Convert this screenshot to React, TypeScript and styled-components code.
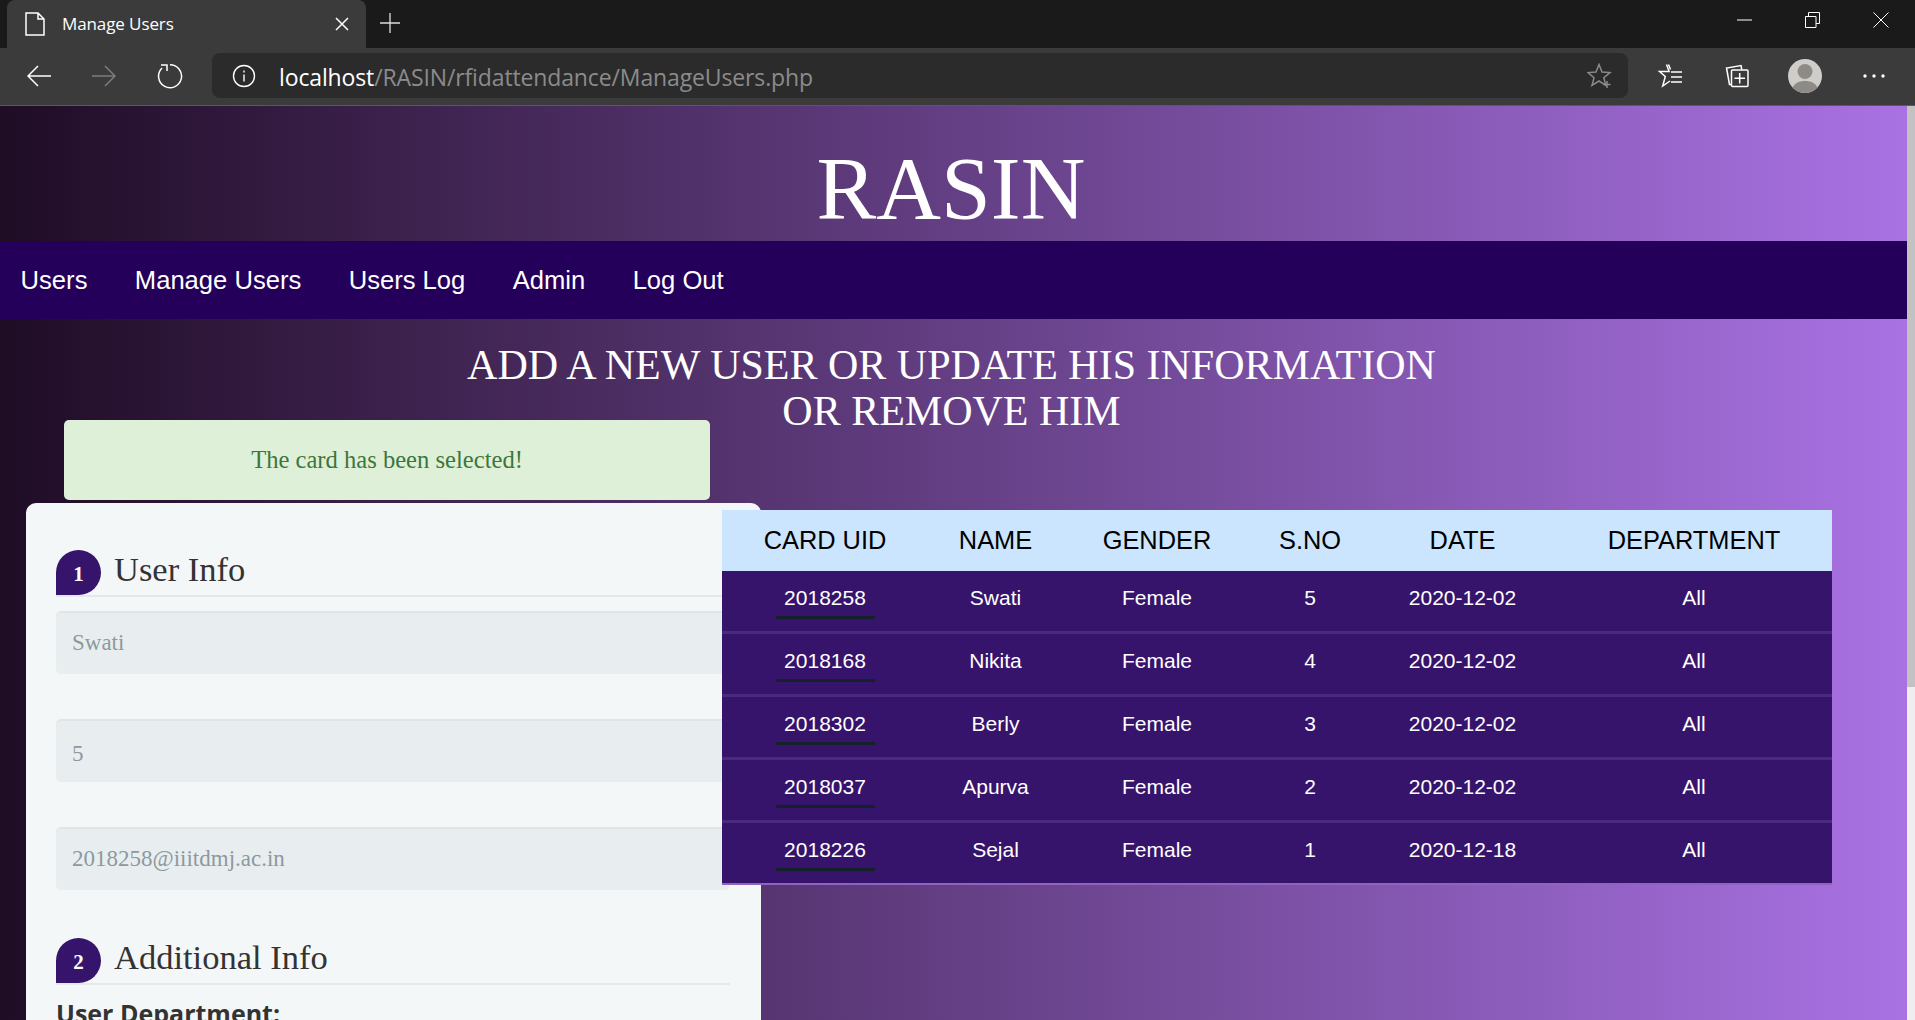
import React from "react";
import styled, { createGlobalStyle } from "styled-components";

const Global = createGlobalStyle`
  html, body { margin: 0; padding: 0; height: 100%; overflow: hidden; background: #1a1a1a; }
  #root { height: 100%; }
  * { box-sizing: border-box; }
`;

const Shell = styled.div`
  width: 1915px; height: 1020px; display: flex; flex-direction: column; overflow: hidden;
`;
const TabStrip = styled.div`
  height: 48px; background: #1a1a1a; display: flex; align-items: flex-start; flex: none;
`;
const Tab = styled.div`
  margin-left: 7px; width: 359px; height: 48px; background: #3b3b3b; border-radius: 8px 8px 0 0;
  display: flex; align-items: center; padding: 0 0 1px 18px; color: #fff;
  font: 400 17px "Open Sans", sans-serif; letter-spacing: -0.1px;
`;
const TabTitle = styled.span`
  margin-left: 17px; flex: 1; margin-top: -1px;
`;
const TabClose = styled.span`
  display: flex; margin-right: 17px;
`;
const NewTab = styled.span`
  display: flex; margin: 13px 0 0 14px;
`;
const Spacer = styled.div`
  flex: 1;
`;
const WindowButton = styled.span<{ $w: number }>`
  width: ${(p) => p.$w}px; height: 40px; display: flex; align-items: center; justify-content: center;
`;
const Toolbar = styled.div`
  height: 58px; background: #3b3b3b; display: flex; align-items: center; flex: none;
  border-bottom: 1px solid #5a5a5a; padding-bottom: 2px;
`;
const NavIcon = styled.span<{ $w: number }>`
  width: ${(p) => p.$w}px; height: 45px; display: flex; align-items: center; justify-content: center; flex: none;
`;
const AddressBar = styled.div`
  width: 1416px; height: 45px; margin-left: 3px; background: #2b2b2b; border-radius: 8px;
  display: flex; align-items: center; padding-left: 20px; flex: none;
  font: 400 23px "Open Sans", sans-serif; letter-spacing: -0.13px; color: #8b8b8b;
`;
const UrlHost = styled.span`
  color: #fff; margin-left: 23px; padding-top: 2px;
`;
const UrlPath = styled.span`
  flex: 1; padding-top: 2px;
`;
const StarAdd = styled.span`
  display: flex; margin-right: 15px;
`;
const Viewport = styled.div`
  flex: 1; display: flex; min-height: 0;
`;
const Page = styled.div`
  flex: 1; min-width: 0; overflow: hidden;
  background: linear-gradient(to right, #1f0c25, #a972e3);
  font-family: "Liberation Sans", Arial, sans-serif;
`;
const ScrollTrack = styled.div`
  width: 8px; flex: none; background: #eeeeee; display: flex;
`;
const ScrollThumb = styled.div`
  width: 100%; height: 581px; background: #c2c2c2;
`;
const Header = styled.header`
  height: 135px; display: flex; align-items: center; justify-content: center; padding: 0 5px 0 0;
`;
const Brand = styled.h1`
  margin: 0; font: 400 89.6px/1 "Liberation Serif", "Times New Roman", serif; color: #fff; padding-top: 28px;
`;
const NavBar = styled.nav`
  height: 78px; background: #24005a; display: flex; align-items: center; padding-left: 20.6px; gap: 47.4px;
`;
const NavLink = styled.a`
  color: #fff; font-size: 25.6px; text-decoration: none;
`;
const Heading = styled.h2`
  margin: 23px auto 0; width: 1000px; text-align: center; color: #fff; position: relative; left: -2px;
  font: 400 42px/46px "Liberation Serif", "Times New Roman", serif;
`;
const Content = styled.div`
  display: flex; align-items: flex-start; margin-top: -14px;
`;
const LeftColumn = styled.div`
  width: 760px; padding-left: 26px; flex: none;
`;
const Alert = styled.div`
  margin-left: 38px; width: 646px; height: 80px; background: #dff0d8; border-radius: 5px;
  color: #3c763d; display: flex; align-items: center; justify-content: center;
  font: 400 24.6px "Liberation Serif", Georgia, serif;
`;
const Card = styled.section`
  margin-top: 3px; height: 560px; width: 735px; background: #f4f7f8; border-radius: 10px 10px 0 0; padding: 47px 31px 0 30px;
  font-family: "Liberation Serif", Georgia, serif;
`;
const SectionTitle = styled.div`
  display: flex; align-items: flex-end; height: 47px; border-bottom: 2px solid #e4e8ea;
  font-size: 34.5px; color: #333; line-height: 45px;
`;
const Step = styled.span`
  width: 45px; height: 45px; background: #37146b; color: #fff; border-radius: 50% 50% 50% 0;
  display: flex; align-items: center; justify-content: center; flex: none; margin-right: 13px;
  font: 700 21px "Liberation Serif", Georgia, serif; padding-top: 4px; align-self: flex-start;
`;
const TitleText = styled.span`
  margin-bottom: 3px;
`;
const Fields = styled.div`
  margin-top: 14px; display: flex; flex-direction: column; gap: 45px;
`;
const Field = styled.div<{ $drop?: number }>`
  height: 63px; background: #e8eeef; border-radius: 5px; box-shadow: inset 0 2px 0 rgba(0,0,0,.03);
  color: #8d999f; font-size: 23px; display: flex; align-items: center; padding: ${(p) => p.$drop ?? 0}px 0 0 16px;
`;
const SecondTitle = styled(SectionTitle)`
  margin-top: 48px;
`;
const Label = styled.div`
  margin-top: 13px; font: 700 25px/30px "Open Sans", "Noto Sans", sans-serif; color: #333;
`;
const TableWrap = styled.div`
  margin: 90px 0 0 -38px; width: 1110px; flex: none; border-bottom: 2px solid #8f63c0;
`;
const Table = styled.table`
  width: 1110px; border-collapse: separate; border-spacing: 0; table-layout: fixed;
`;
const HeadCell = styled.th<{ $w: number }>`
  width: ${(p) => p.$w}px; height: 61px; background: #cce5ff; color: #000; font-size: 25.4px; font-weight: 400; text-align: center; padding: 0;
`;
const Cell = styled.td`
  height: 63px; background: #37146b; border-bottom: 3px solid #4a2a7c;
  color: #fff; font-size: 21px; text-align: center; padding: 0 0 6px;
  tr:last-child > & { border-bottom: 0; height: 60px; }
`;
const CardCell = styled(Cell)`
  padding: 0 0 3px;
`;
const CardId = styled.span`
  display: inline-block; width: 99px; padding-bottom: 6px; margin-top: 6px; border-bottom: 3px solid #14212b; line-height: 24px;
`;

const I = { fill: "none", stroke: "#fff", strokeWidth: 1.5 };

const rows = [
  ["2018258", "Swati", "Female", "5", "2020-12-02", "All"],
  ["2018168", "Nikita", "Female", "4", "2020-12-02", "All"],
  ["2018302", "Berly", "Female", "3", "2020-12-02", "All"],
  ["2018037", "Apurva", "Female", "2", "2020-12-02", "All"],
  ["2018226", "Sejal", "Female", "1", "2020-12-18", "All"],
];
const heads: [string, number][] = [
  ["CARD UID", 206], ["NAME", 135], ["GENDER", 188], ["S.NO", 118], ["DATE", 187], ["DEPARTMENT", 276],
];

export default function App() {
  return (
    <Shell>
      <Global />
      <TabStrip>
        <Tab>
          <svg width="20" height="24" viewBox="0 0 20 24" {...I}>
            <path d="M1 1h12l6 6v16H1zM13 1v6h6" />
          </svg>
          <TabTitle>Manage Users</TabTitle>
          <TabClose>
            <svg width="14" height="14" viewBox="0 0 14 14" {...I}><path d="M1 1l12 12M13 1L1 13" /></svg>
          </TabClose>
        </Tab>
        <NewTab>
          <svg width="20" height="20" viewBox="0 0 20 20" fill="none" stroke="#ddd" strokeWidth="1.3"><path d="M10 0v20M0 10h20" /></svg>
        </NewTab>
        <Spacer />
        <WindowButton $w={68}>
          <svg width="15" height="2" viewBox="0 0 15 2"><path d="M0 1h15" stroke="#fff" strokeWidth="1" /></svg>
        </WindowButton>
        <WindowButton $w={68}>
          <svg width="15" height="16" viewBox="0 0 15 16" fill="none" stroke="#fff" strokeWidth="1"><path d="M.5 4.5h10.5v11H.5zM3.5 4V.5h11v11H11" /></svg>
        </WindowButton>
        <WindowButton $w={69}>
          <svg width="16" height="16" viewBox="0 0 16 16" fill="none" stroke="#fff" strokeWidth="1"><path d="M.5.5l15 15M15.5.5l-15 15" /></svg>
        </WindowButton>
      </TabStrip>
      <Toolbar>
        <NavIcon $w={77}>
          <svg width="24" height="24" viewBox="0 0 24 24" {...I}><path d="M24 12H1M11 2L1 12l10 10" /></svg>
        </NavIcon>
        <NavIcon $w={54}>
          <svg width="24" height="24" viewBox="0 0 24 24" fill="none" stroke="#7d7d7d" strokeWidth="1.5"><path d="M0 12h23M13 2l10 10-10 10" /></svg>
        </NavIcon>
        <NavIcon $w={78}>
          <svg width="26" height="26" viewBox="0 0 26 26" {...I}><path d="M13 1.700A11.500 11.500 0 1 1 5 5M4 2h6v6" /></svg>
        </NavIcon>
        <AddressBar>
          <svg width="24" height="24" viewBox="0 0 24 24" fill="none" stroke="#fff" strokeWidth="1.4" style={{ flex: "none" }}>
            <circle cx="12" cy="12" r="10.5" /><path d="M12 10.5v7M12 6.5v2" />
          </svg>
          <UrlHost>localhost</UrlHost>
          <UrlPath>/RASIN/rfidattendance/ManageUsers.php</UrlPath>
          <StarAdd>
            <svg width="26" height="26" viewBox="0 0 26 26" fill="none" stroke="#8a8a8a" strokeWidth="1.5">
              <path d="M12 1.5l3 7.6 8 .5-6.2 5.2 2 7.6L12 18l-7 4.4 2-7.6L1 9.600l8-.5z" /><path d="M20 18v7M16.500 21.500h7" />
            </svg>
          </StarAdd>
        </AddressBar>
        <NavIcon $w={84}>
          <svg width="26" height="26" viewBox="0 0 26 26" {...I}>
            <path d="M9.500 1.500l2.600 7h-9.600l5.800 5-2.600 9.500L13 18" /><path d="M11.500 1.500l2 5M14 9h11M14 14h11M14 19h11" />
          </svg>
        </NavIcon>
        <NavIcon $w={50}>
          <svg width="24" height="24" viewBox="0 0 24 24" {...I}>
            <path d="M7 20.500H4.500L1.500 4 16 1.500l.8 4" /><rect x="6.500" y="6" width="16.500" height="16.500" rx="1" /><path d="M14.700 9v10.500M9.500 14.300h10.500" />
          </svg>
        </NavIcon>
        <NavIcon $w={86}>
          <svg width="34" height="34" viewBox="0 0 34 34">
            <circle cx="17" cy="17" r="17" fill="#cfcdc9" />
            <circle cx="17" cy="12.500" r="7.500" fill="#8e8b87" />
            <path d="M4.500 28.500C7 24 11 22 17 22s10 2 12.500 6.500A17 17 0 0 1 4.500 28.500z" fill="#8e8b87" />
          </svg>
        </NavIcon>
        <NavIcon $w={52}>
          <svg width="22" height="4" viewBox="0 0 22 4" fill="#fff"><circle cx="2" cy="2" r="1.700" /><circle cx="11" cy="2" r="1.700" /><circle cx="20" cy="2" r="1.700" /></svg>
        </NavIcon>
      </Toolbar>
      <Viewport>
        <Page>
          <Header><Brand>RASIN</Brand></Header>
          <NavBar>
            {["Users", "Manage Users", "Users Log", "Admin", "Log Out"].map((t) => (
              <NavLink key={t}>{t}</NavLink>
            ))}
          </NavBar>
          <Heading>ADD A NEW USER OR UPDATE HIS INFORMATION<br />OR REMOVE HIM</Heading>
          <Content>
            <LeftColumn>
              <Alert>The card has been selected!</Alert>
              <Card>
                <SectionTitle><Step>1</Step><TitleText>User Info</TitleText></SectionTitle>
                <Fields>
                  <Field>Swati</Field>
                  <Field $drop={7}>5</Field>
                  <Field>2018258@iiitdmj.ac.in</Field>
                </Fields>
                <SecondTitle><Step>2</Step><TitleText>Additional Info</TitleText></SecondTitle>
                <Label>User Department:</Label>
              </Card>
            </LeftColumn>
            <TableWrap>
              <Table>
                <thead>
                  <tr>{heads.map(([h, w]) => <HeadCell key={h} $w={w}>{h}</HeadCell>)}</tr>
                </thead>
                <tbody>
                  {rows.map((r) => (
                    <tr key={r[0]}>
                      <CardCell><CardId>{r[0]}</CardId></CardCell>
                      {r.slice(1).map((c, i) => <Cell key={i}>{c}</Cell>)}
                    </tr>
                  ))}
                </tbody>
              </Table>
            </TableWrap>
          </Content>
        </Page>
        <ScrollTrack><ScrollThumb /></ScrollTrack>
      </Viewport>
    </Shell>
  );
}
